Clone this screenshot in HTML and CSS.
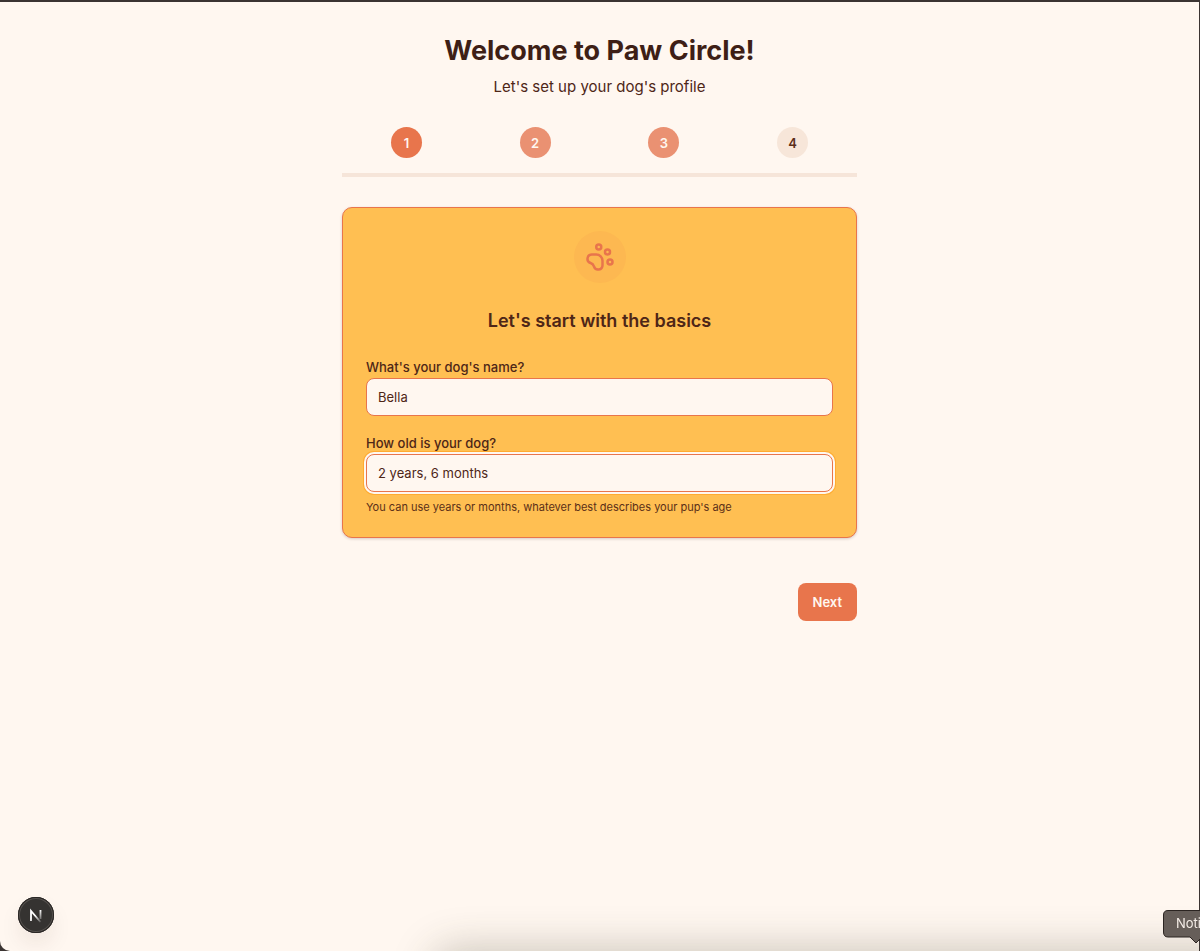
FILE: index.html
```html
<!DOCTYPE html>
<html lang="en">
<head>
<meta charset="utf-8">
<meta name="viewport" content="width=device-width, initial-scale=1">
<title>Paw Circle</title>
<link rel="stylesheet" href="styles.css">
</head>
<body>
<div class="window">
  <main class="onboarding">
    <header class="intro">
      <h1 class="title">Welcome to Paw Circle!</h1>
      <p class="subtitle">Let's set up your dog's profile</p>
    </header>
    <ol class="steps">
      <li class="step"><span class="dot dot-current">1</span></li>
      <li class="step"><span class="dot dot-done">2</span></li>
      <li class="step"><span class="dot dot-done">3</span></li>
      <li class="step"><span class="dot">4</span></li>
    </ol>
    <div class="progress"></div>
    <form class="form">
      <section class="card">
        <div class="badge">
          <svg class="paw" viewBox="0 0 24 24" fill="none" stroke="currentColor" stroke-width="2" stroke-linecap="round" stroke-linejoin="round" aria-hidden="true">
            <circle cx="11" cy="4" r="2"/>
            <circle cx="18" cy="8" r="2"/>
            <circle cx="20" cy="16" r="2"/>
            <path d="M9 10a5 5 0 0 1 5 5v3.5a3.5 3.5 0 0 1-6.84 1.045Q6.52 17.48 4.46 16.84A3.5 3.5 0 0 1 5.5 10Z"/>
          </svg>
        </div>
        <h2 class="heading">Let's start with the basics</h2>
        <div class="field">
          <label class="label" for="dog-name">What's your dog's name?</label>
          <input class="input" id="dog-name" type="text" value="Bella">
        </div>
        <div class="field">
          <label class="label" for="dog-age">How old is your dog?</label>
          <input class="input input-active" id="dog-age" type="text" value="2 years, 6 months">
          <p class="hint">You can use years or months, whatever best describes your pup's age</p>
        </div>
      </section>
      <div class="actions">
        <button class="next" type="button">Next</button>
      </div>
    </form>
  </main>
  <div class="dock-shadow"></div>
</div>
<button class="devtools" type="button" aria-label="Open developer tools">
  <svg class="devtools-logo" viewBox="0 0 36 36" fill="none" aria-hidden="true">
    <defs>
      <linearGradient id="diagonal" x1="18" y1="18" x2="23" y2="24" gradientUnits="userSpaceOnUse">
        <stop stop-color="#fff"/>
        <stop offset="1" stop-color="#fff" stop-opacity="0.2"/>
      </linearGradient>
      <linearGradient id="stem" x1="22" y1="13" x2="22" y2="22" gradientUnits="userSpaceOnUse">
        <stop stop-color="#fff"/>
        <stop offset="1" stop-color="#fff" stop-opacity="0.3"/>
      </linearGradient>
    </defs>
    <path d="M13 24V14L22.500 25" stroke="url(#diagonal)" stroke-width="1.800"/>
    <path d="M22.500 13v9" stroke="url(#stem)" stroke-width="1.800"/>
  </svg>
</button>
<div class="tooltip" role="tooltip">
  <svg class="tooltip-shape" viewBox="0 0 37 35" aria-hidden="true">
    <path d="M38 .5H5Q.5.5.5 5V22Q.5 27 5 27H27L33 33L38 28Z" fill="#665e59" stroke="#2b2421"/>
  </svg>
  <span class="tooltip-text">Noti</span>
</div>
</body>
</html>
```
FILE: styles.css
```css
* {
  box-sizing: border-box;
}

html,
body {
  height: 100%;
  margin: 0;
}

body {
  background: #3b3432;
  color: #3e1f16;
  font-family: Inter, "Liberation Sans", sans-serif;
  overflow: hidden;
}

h1, h2, p, ol {
  margin: 0;
  padding: 0;
}

.window {
  position: relative;
  min-height: calc(100vh - 2px);
  margin: 2px 1px 0 0;
  padding: 31px 16px;
  background: #fff7f0;
  border-radius: 0 0 0 10px;
  overflow: hidden;
}

.onboarding {
  max-width: 515px;
  margin: 0 auto;
}

.intro {
  text-align: center;
}

.title {
  font-size: 27px;
  line-height: 36px;
  font-weight: 700;
}

.subtitle {
  margin-top: 7px;
  font-size: 15px;
  line-height: 22px;
  color: #4e2617;
}

.steps {
  display: grid;
  grid-template-columns: repeat(4, 1fr);
  margin-top: 29px;
  list-style: none;
}

.step {
  display: flex;
  justify-content: center;
}

.dot {
  display: flex;
  align-items: center;
  justify-content: center;
  width: 31px;
  height: 31px;
  border-radius: 50%;
  background: #f7e6d9;
  color: #5b2f18;
  font-size: 13px;
  font-weight: 600;
}

.dot-current {
  background: #e8754c;
  color: #fff7f0;
}

.dot-done {
  background: #ea9172;
  color: #fff7f0;
}

.progress {
  height: 4px;
  margin-top: 15px;
  background: #f6e5d9;
}

.card {
  display: flex;
  flex-direction: column;
  margin-top: 30px;
  padding: 23px 23px 22px;
  background: #ffbf52;
  border: 1px solid #e8754c;
  border-radius: 10px;
  box-shadow: 0 1px 3px rgba(62, 31, 22, 0.2);
}

.badge {
  display: flex;
  align-items: center;
  justify-content: center;
  align-self: center;
  width: 52px;
  height: 52px;
  border-radius: 50%;
  background: #fdb851;
  color: #e8754c;
}

.paw {
  width: 30px;
  height: 30px;
}

.heading {
  margin: 25px 0 24px;
  font-size: 18px;
  line-height: 26px;
  font-weight: 600;
  text-align: center;
  color: #4e2617;
}

.field {
  display: flex;
  flex-direction: column;
}

.field + .field {
  margin-top: 18px;
}

.label {
  margin-bottom: 2px;
  font-size: 13px;
  line-height: 18px;
  font-weight: 500;
  color: #4e2617;
}

.input {
  width: 100%;
  height: 38px;
  padding: 0 11px;
  background: #fff7f0;
  border: 1px solid #e8754c;
  border-radius: 8px;
  color: #4e2617;
  font: 400 13px/20px Inter, "Liberation Sans", sans-serif;
  outline: none;
}

.input-active {
  box-shadow: 0 0 0 2px #fff7f0, 0 0 0 3px #ffab30;
}

.hint {
  margin-top: 7px;
  font-size: 11px;
  line-height: 16px;
  color: #5b2f18;
}

.actions {
  display: flex;
  justify-content: flex-end;
  margin-top: 45px;
}

.next {
  height: 38px;
  padding: 0 15px;
  background: #e8754c;
  border: 0;
  border-radius: 8px;
  color: #fff7f0;
  font: 600 13px/20px Inter, "Liberation Sans", sans-serif;
}

.dock-shadow {
  position: absolute;
  top: 100%;
  left: 435px;
  right: -40px;
  height: 60px;
  border-radius: 20px;
  box-shadow: 0 0 42px 2px rgba(60, 60, 40, 0.28);
}

.devtools {
  position: fixed;
  left: 18px;
  bottom: 18px;
  width: 36px;
  height: 36px;
  padding: 0;
  border: 0;
  border-radius: 50%;
  background: #353331;
  box-shadow: inset 0 0 0 1px #292624, inset 0 0 0 2px #55514e, 0 12px 24px -4px rgba(62, 31, 22, 0.12);
}

.devtools-logo {
  display: block;
  width: 36px;
  height: 36px;
}

.tooltip {
  position: fixed;
  right: 0;
  bottom: 6px;
  width: 37px;
  height: 35px;
}

.tooltip-shape {
  position: absolute;
  inset: 0;
}

.tooltip-text {
  position: relative;
  display: block;
  padding-left: 13px;
  font-size: 13px;
  line-height: 27px;
  color: #f5ede7;
}
```
